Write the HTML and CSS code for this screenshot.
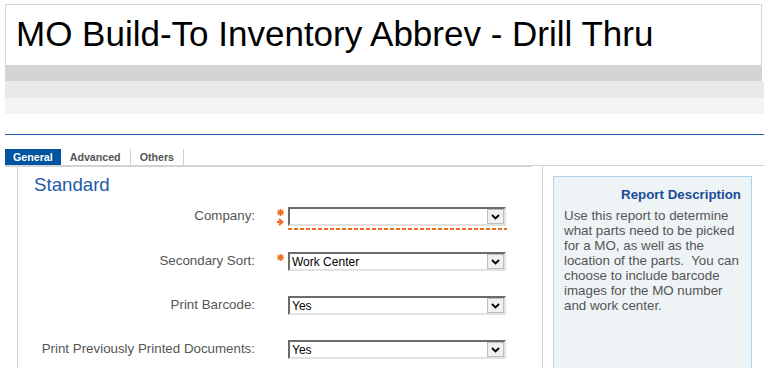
FILE: index.html
```html
<!DOCTYPE html>
<html lang="en">
<head>
    <meta charset="UTF-8">
    <title>MO Build-To Inventory Abbrev - Drill Thru</title>
    <link rel="stylesheet" href="styles.css">
</head>
<body>
    <div class="header">
        <div class="title-box">
            <h1>MO Build-To Inventory Abbrev - Drill Thru</h1>
        </div>
        <div class="band band1"></div>
        <div class="band band2"></div>
        <div class="band band3"></div>
    </div>

    <div class="tabs">
        <span class="tab active">General</span><span class="tab">Advanced</span><span class="tab">Others</span>
    </div>

    <div class="content">
        <div class="main">
            <div class="form">
                <h2>Standard</h2>

                <div class="row row-first">
                    <label class="label">Company:</label>
                    <div class="marker">
                        <svg class="star" width="7" height="7" viewBox="0 0 7 7"><path d="M3.5 0V7M0 3.5H7M1 1L6 6M6 1L1 6"/></svg>
                        <svg class="arrow" width="7" height="8" viewBox="0 0 7 8"><path d="M2 1L5.5 4L2 7M0 4H5"/></svg>
                    </div>
                    <div class="field">
                        <div class="select">
                            <span class="value"></span>
                            <span class="btn"><svg width="9" height="6" viewBox="0 0 9 6"><path d="M1 1L4.5 4.5L8 1"/></svg></span>
                        </div>
                        <div class="dash"></div>
                    </div>
                </div>

                <div class="row">
                    <label class="label">Secondary Sort:</label>
                    <div class="marker">
                        <svg class="star" width="7" height="7" viewBox="0 0 7 7"><path d="M3.5 0V7M0 3.5H7M1 1L6 6M6 1L1 6"/></svg>
                    </div>
                    <div class="select">
                        <span class="value">Work Center</span>
                        <span class="btn"><svg width="9" height="6" viewBox="0 0 9 6"><path d="M1 1L4.5 4.5L8 1"/></svg></span>
                    </div>
                </div>

                <div class="row">
                    <label class="label">Print Barcode:</label>
                    <div class="marker"></div>
                    <div class="select">
                        <span class="value">Yes</span>
                        <span class="btn"><svg width="9" height="6" viewBox="0 0 9 6"><path d="M1 1L4.5 4.5L8 1"/></svg></span>
                    </div>
                </div>

                <div class="row">
                    <label class="label">Print Previously Printed Documents:</label>
                    <div class="marker"></div>
                    <div class="select">
                        <span class="value">Yes</span>
                        <span class="btn"><svg width="9" height="6" viewBox="0 0 9 6"><path d="M1 1L4.5 4.5L8 1"/></svg></span>
                    </div>
                </div>
            </div>
        </div>

        <div class="side">
            <div class="side-inner">
                <div class="desc">
                    <h3>Report Description</h3>
                    <p>Use this report to determine what parts need to be picked for a MO, as well as the location of the parts.&nbsp; You can choose to include barcode images for the MO number and work center.</p>
                </div>
            </div>
        </div>
    </div>
</body>
</html>
```

FILE: styles.css
```css
body {
    margin: 0;
    font-family: "Liberation Sans", Arial, sans-serif;
    background: #fff;
    overflow: hidden;
}

/* en-tete */
.header {
    margin: 4px 0 0 5px;
    padding-bottom: 20px;
    border-bottom: 1px solid #1f5ea8;
}

.title-box {
    border: 1px solid #d6d6d6;
    border-bottom: 0;
    margin-right: 2px;
    height: 60px;
    padding-left: 10px;
}

h1 {
    margin: 0;
    padding-top: 9px;
    font-size: 35px;
    font-weight: normal;
    line-height: 40px;
    color: #000;
}

.band1 {
    height: 16px;
    background: #d4d4d4;
    margin-right: 2px;
}

.band2 {
    height: 17px;
    background: #e9e9e9;
}

.band3 {
    height: 16px;
    background: #f4f4f4;
}

/* onglets */
.tabs {
    display: flex;
    margin: 14px 0 0 5px;
    height: 16px;
}

.tab {
    font-size: 8pt;
    font-weight: bold;
    color: #555;
    line-height: 16px;
    padding: 0 9px;
    border-right: 1px solid #d0d0d0;
}

.tab.active {
    background: #00539f;
    color: #fff;
    padding: 0 8px;
    border-right: 0;
}

/* contenu */
.content {
    display: flex;
    margin-left: 5px;
}

.main {
    width: 527px;
    border-top: 2px solid #d3d3d3;
}

.form {
    margin-left: 12px;
    border-left: 1px solid #cfcfcf;
    padding-top: 7px;
    min-height: 220px;
}

h2 {
    margin: 0;
    padding-left: 16px;
    font-size: 14pt;
    font-weight: normal;
    line-height: 21px;
    color: #1d5aa8;
}

.row {
    display: flex;
    align-items: flex-start;
    margin-bottom: 25px;
}

.row-first {
    margin-top: 12px;
    margin-bottom: 22px;
}

.label {
    width: 237px;
    text-align: right;
    font-size: 10pt;
    line-height: 18px;
    color: #555;
}

.marker {
    width: 33px;
    display: flex;
    flex-direction: column;
    padding-left: 22px;
    box-sizing: border-box;
}

.marker svg {
    display: block;
    margin-top: 2px;
    fill: none;
    stroke: #f26c1f;
}

.star {
    stroke-width: 1.4;
}

.arrow {
    stroke-width: 2;
}

.field {
    display: flex;
    flex-direction: column;
}

.select {
    width: 218px;
    height: 19px;
    box-sizing: border-box;
    border: 2px solid;
    border-color: #6b6b6b #e2e2e2 #e2e2e2 #6b6b6b;
    background: #fff;
    display: flex;
    font-size: 12px;
    color: #000;
}

.select .value {
    flex: 1;
    padding-left: 2px;
    line-height: 17px;
}

.select .btn {
    width: 17px;
    height: 15px;
    box-sizing: border-box;
    background: #f0f0f0;
    border: 1px solid #bdbdbd;
    display: flex;
    align-items: center;
    justify-content: center;
}

.select .btn svg {
    fill: none;
    stroke: #000;
    stroke-width: 1.8;
}

.dash {
    width: 219px;
    height: 2px;
    margin-top: 2px;
    background: repeating-linear-gradient(90deg, #f26c1f 0 4px, transparent 4px 6px);
}

/* colonne de droite */
.side {
    flex: 1;
    border-top: 1px solid #d3d3d3;
    padding-left: 10px;
}

.side-inner {
    border-left: 1px solid #cfcfcf;
    padding: 10px 0 0 10px;
    min-height: 220px;
}

.desc {
    width: 199px;
    box-sizing: border-box;
    min-height: 240px;
    background: #eef3f6;
    border: 1px solid #a9d4ec;
    padding: 10px 6px 0 10px;
}

.desc h3 {
    margin: 0 4px 5px 0;
    text-align: right;
    font-size: 10pt;
    line-height: 16px;
    color: #1a4c98;
}

.desc p {
    margin: 0;
    font-size: 10pt;
    color: #555;
}
```
